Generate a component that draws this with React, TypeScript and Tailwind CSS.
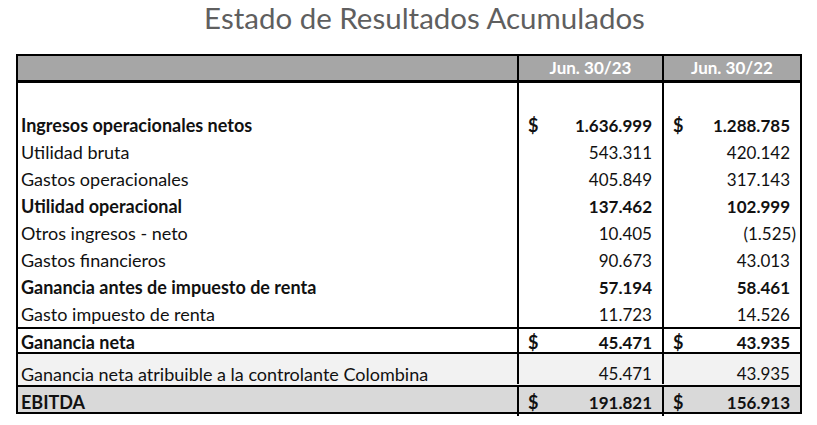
type Row = {
  label: string;
  a: string;
  b: string;
  bold?: boolean;
  dollar?: boolean;
};

const rows: Row[] = [
  { label: "Ingresos operacionales netos", a: "1.636.999", b: "1.288.785", bold: true, dollar: true },
  { label: "Utilidad bruta", a: "543.311", b: "420.142" },
  { label: "Gastos operacionales", a: "405.849", b: "317.143" },
  { label: "Utilidad operacional", a: "137.462", b: "102.999", bold: true },
  { label: "Otros ingresos - neto", a: "10.405", b: "(1.525)" },
  { label: "Gastos financieros", a: "90.673", b: "43.013" },
  { label: "Ganancia antes de impuesto de renta", a: "57.194", b: "58.461", bold: true },
  { label: "Gasto impuesto de renta", a: "11.723", b: "14.526" },
];

function Amount({ value, dollar }: { value: string; dollar?: boolean }) {
  const neg = value.startsWith("(");
  return (
    <div className="flex items-center justify-between pl-[9px] pr-[10px] text-[17px]">
      <span className="text-[18px]">{dollar ? "$" : ""}</span>
      {neg ? (
        <span>
          {value.slice(0, -1)}
          <span className="-mr-[6px]">)</span>
        </span>
      ) : (
        <span>{value}</span>
      )}
    </div>
  );
}

export default function App() {
  return (
    <div
      className="h-[425px] w-[817px] bg-white text-[#111]"
      style={{ fontFamily: "Lato, 'Open Sans', sans-serif" }}
    >
      <h1 className="pl-[32px] pt-[1px] text-center text-[29.5px] leading-[34px] font-normal text-[#5f5f5f]">
        Estado de Resultados Acumulados
      </h1>

      <div className="ml-[16px] mt-[19px] w-[786px] border-2 border-black text-[18px]">
        <div className="grid h-[27px] grid-cols-[499px_145px_138px] border-b-[3px] border-black bg-[#a6a6a6] text-[17px] font-bold leading-[24px] text-white">
          <div />
          <div className="border-l-2 border-black text-center">Jun. 30/23</div>
          <div className="border-l-2 border-black text-center">Jun. 30/22</div>
        </div>

        <div className="grid h-[29px] grid-cols-[499px_145px_138px]">
          <div />
          <div className="border-l-2 border-black" />
          <div className="border-l-2 border-black" />
        </div>

        {rows.map((r, i) => (
          <div
            key={r.label}
            className={`grid grid-cols-[499px_145px_138px] items-center ${i === rows.length - 1 ? "h-[26px]" : "h-[27px]"} ${r.bold ? "font-bold" : ""}`}
          >
            <div className="pl-[3px]">{r.label}</div>
            <div className="flex h-full items-center border-l-2 border-black">
              <div className="w-full">
                <Amount value={r.a} dollar={r.dollar} />
              </div>
            </div>
            <div className="flex h-full items-center border-l-2 border-black">
              <div className="w-full">
                <Amount value={r.b} dollar={r.dollar} />
              </div>
            </div>
          </div>
        ))}

        <div className="grid h-[27px] grid-cols-[499px_145px_138px] items-center border-y-2 border-black font-bold">
          <div className="pl-[3px]">Ganancia neta</div>
          <div className="flex h-full items-center border-l-2 border-black">
            <div className="w-full">
              <Amount value="45.471" dollar />
            </div>
          </div>
          <div className="flex h-full items-center border-l-2 border-black">
            <div className="w-full">
              <Amount value="43.935" dollar />
            </div>
          </div>
        </div>

        <div className="grid h-[33px] grid-cols-[499px_145px_138px] items-end border-b-2 border-black bg-[#f2f2f2] pb-[1px] leading-[20px]">
          <div className="pl-[3px]">Ganancia neta atribuible a la controlante Colombina</div>
          <div className="flex h-full items-end border-l-2 border-black">
            <div className="w-full">
              <Amount value="45.471" />
            </div>
          </div>
          <div className="flex h-full items-end border-l-2 border-black">
            <div className="w-full">
              <Amount value="43.935" />
            </div>
          </div>
        </div>

        <div className="grid h-[25px] grid-cols-[499px_145px_138px] items-center bg-[#d9d9d9] font-bold">
          <div className="pl-[3px] pt-[2px]">EBITDA</div>
          <div className="flex h-full items-center border-l-2 border-black pt-[2px]">
            <div className="w-full">
              <Amount value="191.821" dollar />
            </div>
          </div>
          <div className="flex h-full items-center border-l-2 border-black pt-[2px]">
            <div className="w-full">
              <Amount value="156.913" dollar />
            </div>
          </div>
        </div>
      </div>
    </div>
  );
}
